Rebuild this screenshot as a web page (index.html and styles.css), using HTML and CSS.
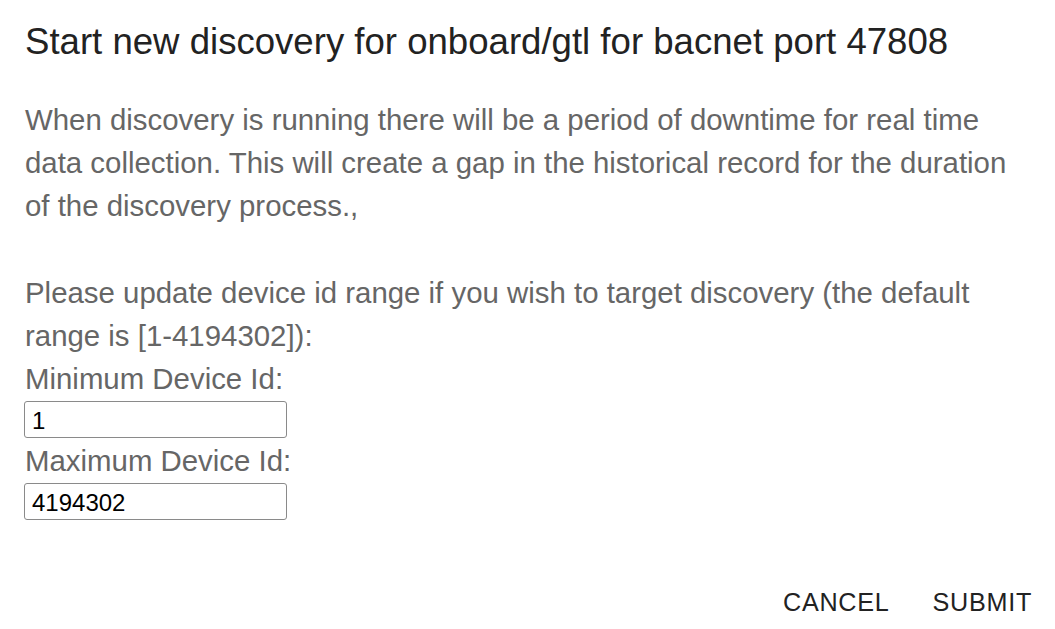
FILE: index.html
```html
<!DOCTYPE html>
<html>
<head>
<meta charset="utf-8">
<link rel="stylesheet" href="styles.css">
</head>
<body>
<div class="dialog">
  <h2 class="title">Start new discovery for onboard/gtl for bacnet port 47808</h2>
  <div class="content">
    <p class="text">When discovery is running there will be a period of downtime for real time data collection. This will create a gap in the historical record for the duration of the discovery process.,</p>
    <p class="text gap">Please update device id range if you wish to target discovery (the default range is [1-4194302]):</p>
    <label class="text label">Minimum Device Id:</label>
    <input class="field" type="text" value="1">
    <label class="text label">Maximum Device Id:</label>
    <input class="field" type="text" value="4194302">
  </div>
  <div class="actions">
    <button class="btn">CANCEL</button>
    <button class="btn">SUBMIT</button>
  </div>
</div>
</body>
</html>
```
FILE: styles.css
```css
html, body {
  margin: 0;
  padding: 0;
  background: #fff;
}
body {
  font-family: "Liberation Sans", Arial, Helvetica, sans-serif;
}
.dialog {
  width: 1055px;
  height: 629px;
  box-sizing: border-box;
  display: flex;
  flex-direction: column;
}
.title {
  margin: 0;
  padding: 21px 25px 0 25px;
  font-size: 36.6px;
  font-weight: 400;
  line-height: 42px;
  color: #222;
}
.content {
  padding: 35px 40px 0 25px;
  display: flex;
  flex-direction: column;
  align-items: flex-start;
}
.text {
  margin: 0;
  font-size: 29.4px;
  line-height: 43px;
  color: #666;
}
.gap {
  margin-top: 44px;
}
.label {
  display: block;
}
.field {
  width: 263px;
  height: 37px;
  box-sizing: border-box;
  margin: 1px 0 1px -1px;
  padding: 2px 7px 0;
  border: 1px solid #8a8a8a;
  border-radius: 3px;
  font-family: "Liberation Sans", Arial, sans-serif;
  font-size: 24px;
  color: #000;
  background: #fff;
}
.actions {
  margin-top: auto;
  display: flex;
  justify-content: flex-end;
  gap: 13px;
  padding: 0 9px 4px 0;
}
.btn {
  border: none;
  background: none;
  font-family: "Liberation Sans", Arial, sans-serif;
  font-size: 25.2px;
  letter-spacing: 0.72px;
  color: #222;
  padding: 8px 14px 8px 16px;
  line-height: 30px;
}
```
